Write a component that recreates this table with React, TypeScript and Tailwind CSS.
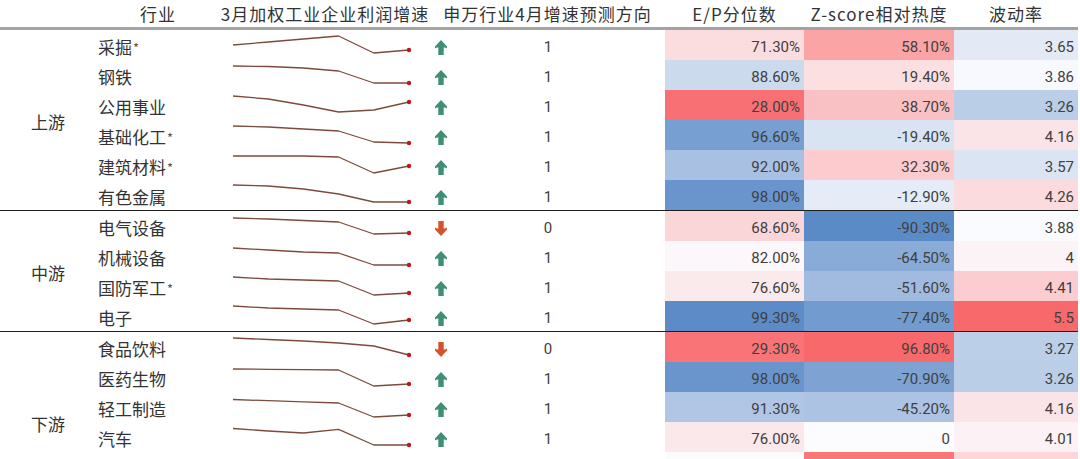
import React from "react";

type Row = {
  name: string;
  star?: boolean;
  spark: number[];
  dir: number;
  ep: number;
  z: number;
  vol: number;
  blank?: boolean;
};

const groups: { label: string; rows: Row[] }[] = [
  {
    label: "上游",
    rows: [
      { name: "采掘", star: true, spark: [14, 11, 8, 5, 22, 19], dir: 1, ep: 71.3, z: 58.1, vol: 3.65 },
      { name: "钢铁", spark: [5, 5.5, 7, 10, 22, 22], dir: 1, ep: 88.6, z: 19.4, vol: 3.86 },
      { name: "公用事业", spark: [5, 8, 14, 21, 19, 11], dir: 1, ep: 28.0, z: 38.7, vol: 3.26 },
      { name: "基础化工", star: true, spark: [5, 6, 8, 10, 21, 22], dir: 1, ep: 96.6, z: -19.4, vol: 4.16 },
      { name: "建筑材料", star: true, spark: [5, 5, 5, 6, 22, 15], dir: 1, ep: 92.0, z: 32.3, vol: 3.57 },
      { name: "有色金属", spark: [4, 5, 8, 13, 21, 21], dir: 1, ep: 98.0, z: -12.9, vol: 4.26 },
    ],
  },
  {
    label: "中游",
    rows: [
      { name: "电气设备", spark: [6, 7, 8.5, 10, 22, 21], dir: 0, ep: 68.6, z: -90.3, vol: 3.88 },
      { name: "机械设备", spark: [6, 8, 10, 11, 23, 23], dir: 1, ep: 82.0, z: -64.5, vol: 4 },
      { name: "国防军工", star: true, spark: [5, 7, 8, 9, 23, 21], dir: 1, ep: 76.6, z: -51.6, vol: 4.41 },
      { name: "电子", spark: [4, 6, 7, 8, 22, 18], dir: 1, ep: 99.3, z: -77.4, vol: 5.5 },
    ],
  },
  {
    label: "下游",
    rows: [
      { name: "食品饮料", spark: [5, 6.5, 8, 10, 13, 22], dir: 0, ep: 29.3, z: 96.8, vol: 3.27 },
      { name: "医药生物", spark: [6, 6.3, 6.7, 7, 23, 21], dir: 1, ep: 98.0, z: -70.9, vol: 3.26 },
      { name: "轻工制造", spark: [6.5, 7.7, 8.8, 10, 24, 22], dir: 1, ep: 91.3, z: -45.2, vol: 4.16 },
      { name: "汽车", spark: [5.5, 8, 10, 6.3, 22, 22], dir: 1, ep: 76.0, z: 0, vol: 4.01 },
      // rows below the fold: only their cell colours peek in at the bottom edge
      { name: "r15", blank: true, spark: [], dir: 1, ep: 84.0, z: 88.0, vol: 4.3 },
      { name: "r16", blank: true, spark: [], dir: 1, ep: 80.0, z: 10.0, vol: 3.8 },
    ],
  },
];

const RED = [248, 105, 107];
const WHITE = [252, 252, 255];
const BLUE = [90, 138, 198];

// three colour scale, like a spreadsheet heat map
function heat(v: number, min: number, mid: number, max: number, highIsRed: boolean) {
  let t: number;
  let end: number[];
  if (v >= mid) {
    t = Math.min(1, (v - mid) / (max - mid));
    end = highIsRed ? RED : BLUE;
  } else {
    t = Math.min(1, (mid - v) / (mid - min));
    end = highIsRed ? BLUE : RED;
  }
  const c = WHITE.map((w, i) => Math.round(w + (end[i] - w) * t));
  return `rgb(${c[0]}, ${c[1]}, ${c[2]})`;
}

const pct = (v: number) => (v === 0 ? "0" : `${v.toFixed(2)}%`);

const Sparkline = ({ values }: { values: number[] }) => {
  const pts = values.map((y, i) => `${13 + i * 35.2},${y + 1}`).join(" ");
  const last = values[values.length - 1] + 1;
  return (
    <svg width="210" height="30" viewBox="0 0 210 30">
      <polyline points={pts} fill="none" stroke="#7d4b3c" strokeWidth="1.3" strokeLinejoin="round" />
      <circle cx={13 + 5 * 35.2} cy={last} r="2.2" fill="#c3161c" />
    </svg>
  );
};

const Arrow = ({ up }: { up: boolean }) => (
  <svg width="12" height="15" viewBox="0 0 12 15" className={up ? "" : "rotate-180"}>
    <path
      d="M6 0 L12 6.4 L12 8.4 Q10.2 7.2 8.7 7.6 L8.7 15 L3.3 15 L3.3 7.6 Q1.8 7.2 0 8.4 L0 6.4 Z"
      fill={up ? "#3f8f76" : "#d4532b"}
    />
  </svg>
);

const num = "font-['Roboto','Liberation_Sans',sans-serif] text-[15px] text-[#404040]";

const DataRow = ({ row }: { row: Row }) => (
  <div className="grid h-[30px] grid-cols-[124px_210px_235px_139px_150px_124px]">
    <div className="flex items-center pl-[2px] pt-[3px] text-[17px] text-[#333]">
      {!row.blank && row.name}
      {row.star && <span className="ml-[1px] inline-block translate-y-[1px] text-[13px] text-[#555]">*</span>}
    </div>
    <div className="flex items-center">{!row.blank && <Sparkline values={row.spark} />}</div>
    <div className="relative flex items-center justify-center">
      {!row.blank && (
        <>
          <div className="absolute left-[5px] top-[10px] flex">
            <Arrow up={row.dir === 1} />
          </div>
          <span className={`${num} pl-[1px] pt-[4px]`}>{row.dir}</span>
        </>
      )}
    </div>
    <div
      className={`flex items-center justify-end pr-[4px] pt-[4px] ${num}`}
      style={{ backgroundColor: heat(row.ep, 25, 84, 99.5, false) }}
    >
      {!row.blank && pct(row.ep)}
    </div>
    <div
      className={`flex items-center justify-end pr-[4px] pt-[4px] ${num}`}
      style={{ backgroundColor: heat(row.z, -91, 0, 97, true) }}
    >
      {!row.blank && pct(row.z)}
    </div>
    <div
      className={`flex items-center justify-end pr-[4px] pt-[4px] ${num}`}
      style={{ backgroundColor: heat(row.vol, 2.3, 3.9, 5.5, true) }}
    >
      {!row.blank && String(row.vol)}
    </div>
  </div>
);

export default function App() {
  const headers = [
    { w: "w-[96px]", t: "" },
    { w: "w-[124px]", t: "行业" },
    { w: "w-[210px]", t: "3月加权工业企业利润增速" },
    { w: "w-[235px]", t: "申万行业4月增速预测方向" },
    { w: "w-[139px]", t: "E/P分位数" },
    { w: "w-[150px]", t: "Z-score相对热度" },
    { w: "w-[124px]", t: "波动率" },
  ];
  return (
    <div className="h-[459px] w-[1080px] overflow-hidden bg-white font-['Noto_Sans_CJK_SC','Noto_Sans',sans-serif]">
      <div className="w-[1078px]">
        <div className="flex h-[30px] border-b-[3px] border-[#a3a3a3]">
          {headers.map((h, i) => (
            <div
              key={i}
              className={`${h.w} flex shrink-0 items-center justify-center whitespace-nowrap pt-[1px] text-[17px] tracking-[1px] text-[#333]`}
            >
              {h.t}
            </div>
          ))}
        </div>
        {groups.map((g, gi) => (
          <div
            key={g.label}
            className={`flex ${gi < groups.length - 1 ? "border-b-[1.5px] border-[#1e1e1e]" : ""}`}
          >
            <div className="flex w-[96px] shrink-0 items-center justify-center pt-[3px] text-[17px] text-[#333]">
              {g.label}
            </div>
            <div className="flex flex-col">
              {g.rows.map((r) => (
                <DataRow key={r.name} row={r} />
              ))}
            </div>
          </div>
        ))}
      </div>
    </div>
  );
}
